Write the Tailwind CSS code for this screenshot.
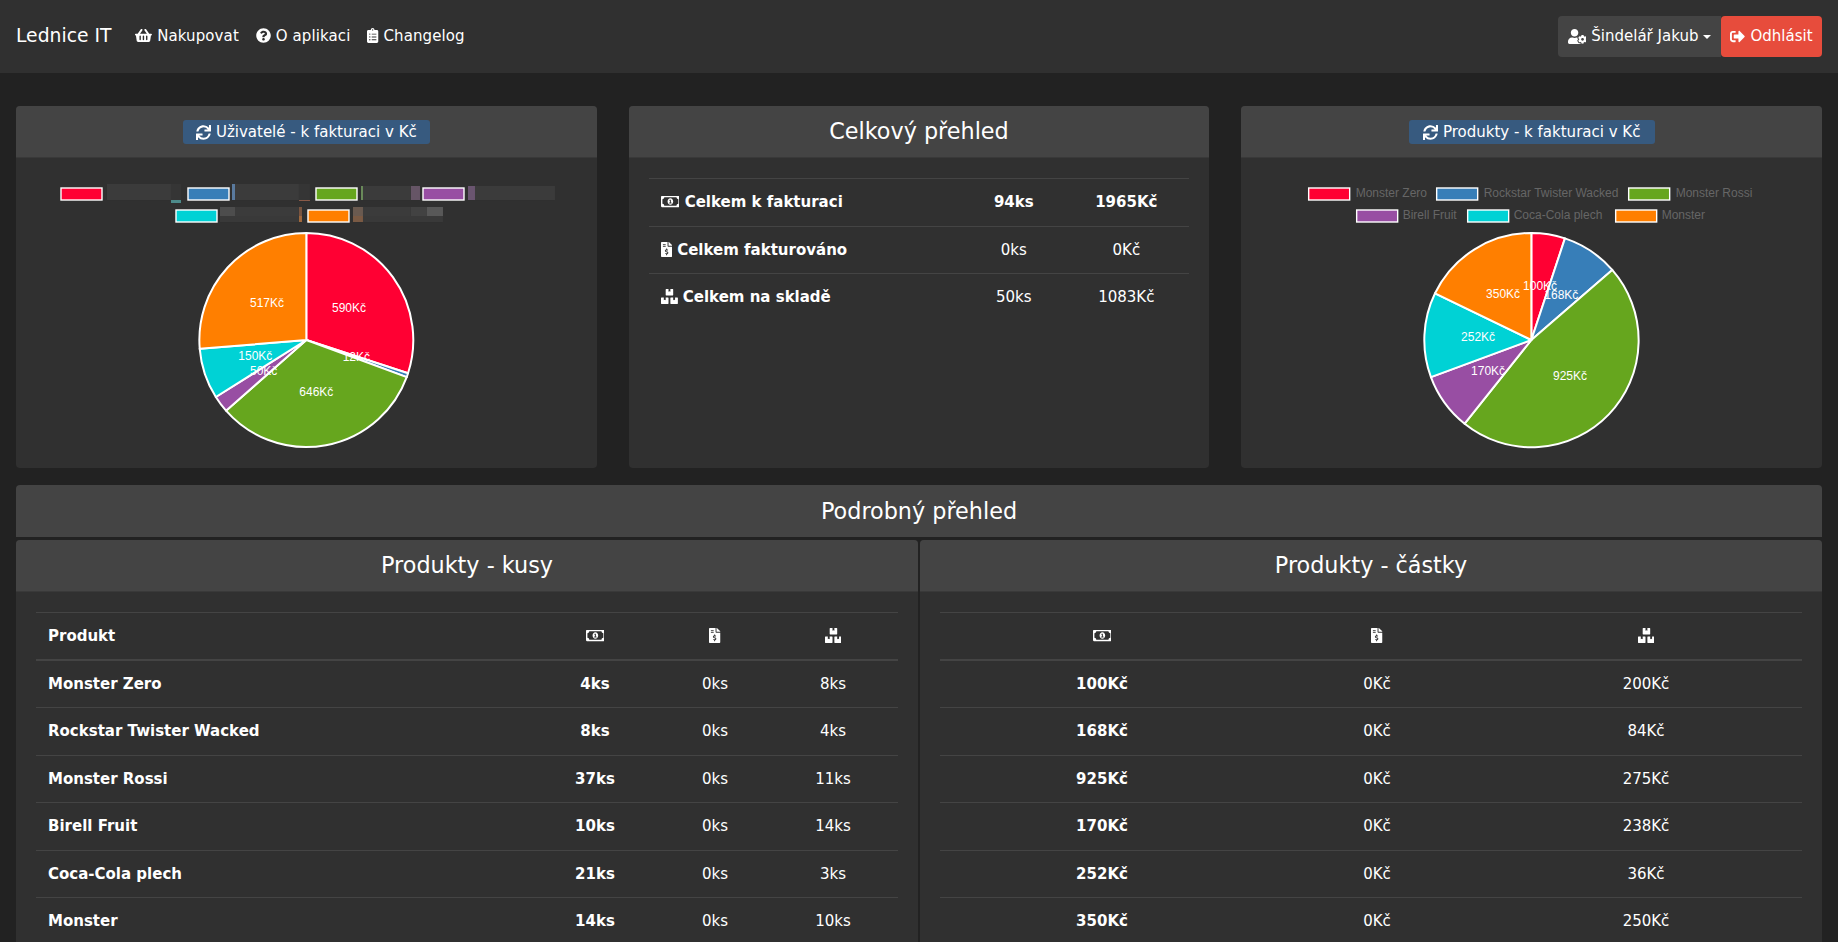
<!DOCTYPE html>
<html lang="cs">
<head>
<meta charset="utf-8">
<title>Lednice IT</title>
<script src="https://cdn.jsdelivr.net/npm/@tailwindcss/browser@4"></script>
</head>
<body class="h-screen overflow-hidden bg-[#222222] text-white font-['DejaVu_Sans',sans-serif] text-[15px] leading-[22.5px]">
<nav class="h-[73px] bg-[#303030] flex items-center px-4">
  <a class="text-[18.75px] mr-6">Lednice IT</a>
  <div class="flex gap-[17px] tracking-[0.1px]">
    <a><svg class="inline-block h-[15px] align-[-2px]" viewBox="0 0 576 512" fill="currentColor"><path d="M576 216v16c0 13.255-10.745 24-24 24h-8l-26.113 182.788C514.509 462.435 494.257 480 470.37 480H105.63c-23.887 0-44.139-17.565-47.518-41.212L32 256h-8c-13.255 0-24-10.745-24-24v-16c0-13.255 10.745-24 24-24h67.341l106.78-146.821c10.395-14.292 30.407-17.453 44.701-7.058 14.293 10.395 17.453 30.408 7.058 44.701L170.477 192h235.046L326.12 82.821c-10.395-14.292-7.234-34.306 7.059-44.701 14.291-10.395 34.306-7.235 44.701 7.058L484.659 192H552c13.255 0 24 10.745 24 24zM312 392V280c0-13.255-10.745-24-24-24s-24 10.745-24 24v112c0 13.255 10.745 24 24 24s24-10.745 24-24zm112 0V280c0-13.255-10.745-24-24-24s-24 10.745-24 24v112c0 13.255 10.745 24 24 24s24-10.745 24-24zm-224 0V280c0-13.255-10.745-24-24-24s-24 10.745-24 24v112c0 13.255 10.745 24 24 24s24-10.745 24-24z"/></svg> Nakupovat</a>
    <a><svg class="inline-block h-[15px] align-[-2px]" viewBox="0 0 512 512" fill="currentColor"><path d="M504 256c0 136.997-111.043 248-248 248S8 392.997 8 256C8 119.083 119.043 8 256 8s248 111.083 248 248zM262.655 90c-54.497 0-89.255 22.957-116.549 63.758-3.536 5.286-2.353 12.415 2.715 16.258l34.699 26.31c5.205 3.947 12.621 3.008 16.665-2.122 17.864-22.658 30.113-35.797 57.303-35.797 20.429 0 45.698 13.148 45.698 32.958 0 14.976-12.363 22.667-32.534 33.976C247.128 238.528 216 254.941 216 296v4c0 6.627 5.373 12 12 12h56c6.627 0 12-5.373 12-12v-1.333c0-28.462 83.186-29.647 83.186-106.667 0-58.002-60.165-102-116.531-102zM256 338c-25.365 0-46 20.635-46 46 0 25.364 20.635 46 46 46s46-20.636 46-46c0-25.365-20.635-46-46-46z"/></svg> O aplikaci</a>
    <a><svg class="inline-block h-[15px] align-[-2px]" viewBox="0 0 384 512" fill="currentColor"><path d="M336 64h-80c0-35.3-28.7-64-64-64s-64 28.7-64 64H48C21.5 64 0 85.5 0 112v352c0 26.5 21.5 48 48 48h288c26.5 0 48-21.5 48-48V112c0-26.5-21.5-48-48-48zM96 424c-13.3 0-24-10.7-24-24s10.7-24 24-24 24 10.7 24 24-10.7 24-24 24zm0-96c-13.3 0-24-10.7-24-24s10.7-24 24-24 24 10.7 24 24-10.7 24-24 24zm0-96c-13.3 0-24-10.7-24-24s10.7-24 24-24 24 10.7 24 24-10.7 24-24 24zm96-192c13.3 0 24 10.7 24 24s-10.7 24-24 24-24-10.7-24-24 10.7-24 24-24zm128 368c0 4.4-3.6 8-8 8H168c-4.4 0-8-3.6-8-8v-16c0-4.4 3.6-8 8-8h144c4.4 0 8 3.6 8 8v16zm0-96c0 4.4-3.6 8-8 8H168c-4.4 0-8-3.6-8-8v-16c0-4.4 3.6-8 8-8h144c4.4 0 8 3.6 8 8v16zm0-96c0 4.4-3.6 8-8 8H168c-4.4 0-8-3.6-8-8v-16c0-4.4 3.6-8 8-8h144c4.4 0 8 3.6 8 8v16z"/></svg> Changelog</a>
  </div>
  <div class="ml-auto flex">
    <a class="h-[41px] w-[163px] bg-[#444444] rounded-l-[4px] flex items-center justify-center gap-[5px]"><svg class="h-[15px]" viewBox="0 0 640 512" fill="currentColor"><path d="M610.5 373.3c2.6-14.1 2.6-28.5 0-42.6l25.8-14.9c3-1.7 4.3-5.2 3.3-8.5-6.7-21.6-18.2-41.2-33.2-57.4-2.3-2.5-6-3.1-9-1.4l-25.8 14.9c-10.9-9.3-23.4-16.5-36.9-21.3v-29.8c0-3.4-2.4-6.4-5.7-7.1-22.3-5-45-4.8-66.2 0-3.3.7-5.7 3.7-5.7 7.1v29.8c-13.5 4.8-26 12-36.9 21.3l-25.8-14.9c-2.9-1.7-6.7-1.1-9 1.4-15 16.2-26.5 35.8-33.2 57.4-1 3.3.4 6.8 3.3 8.5l25.8 14.9c-2.6 14.1-2.6 28.5 0 42.6l-25.8 14.9c-3 1.7-4.3 5.2-3.3 8.5 6.7 21.6 18.2 41.1 33.2 57.4 2.3 2.5 6 3.1 9 1.4l25.8-14.9c10.9 9.3 23.4 16.5 36.9 21.3v29.8c0 3.4 2.4 6.4 5.7 7.1 22.3 5 45 4.8 66.2 0 3.3-.7 5.7-3.7 5.7-7.1v-29.8c13.5-4.8 26-12 36.9-21.3l25.8 14.9c2.9 1.7 6.7 1.1 9-1.4 15-16.2 26.5-35.8 33.2-57.4 1-3.3-.4-6.8-3.3-8.5l-25.8-14.9zM496 400.5c-26.8 0-48.5-21.8-48.5-48.5s21.8-48.5 48.5-48.5 48.5 21.8 48.5 48.5-21.7 48.5-48.5 48.5zM224 256c70.7 0 128-57.3 128-128S294.7 0 224 0 96 57.3 96 128s57.3 128 128 128zm201.2 226.5c-2.3-1.2-4.6-2.6-6.8-3.9l-7.9 4.6c-6 3.4-12.8 5.3-19.6 5.3-10.9 0-21.4-4.6-28.9-12.6-18.3-19.8-32.3-43.9-40.2-69.6-5.5-17.7 1.9-36.4 17.9-45.7l7.9-4.6c-.1-2.6-.1-5.2 0-7.8l-7.9-4.6c-16-9.2-23.4-28-17.9-45.7.9-2.9 2.2-5.8 3.2-8.7-3.8-.3-7.5-1.2-11.4-1.2h-16.7c-22.2 10.2-46.9 16-72.9 16s-50.6-5.8-72.9-16h-16.7C60.2 288 0 348.2 0 422.4V464c0 26.5 21.5 48 48 48h352c10.1 0 19.5-3.2 27.2-8.5-1.2-3.8-2-7.7-2-11.8v-9.2z"/></svg><span>Šindelář Jakub</span><span class="w-0 h-0 border-x-[4px] border-x-transparent border-t-[4px] border-t-white"></span></a>
    <a class="h-[41px] w-[101px] bg-[#e74c3c] rounded-[4px] flex items-center justify-center gap-[5px]"><svg class="h-[15px]" viewBox="0 0 512 512" fill="currentColor"><path d="M497 273L329 441c-15 15-41 4.5-41-17v-96H152c-13.3 0-24-10.7-24-24v-96c0-13.3 10.7-24 24-24h136V88c0-21.4 25.9-32 41-17l168 168c9.3 9.4 9.3 24.6 0 34zM192 436v-40c0-6.6-5.4-12-12-12H96c-17.7 0-32-14.3-32-32V160c0-17.7 14.3-32 32-32h84c6.6 0 12-5.4 12-12V76c0-6.6-5.4-12-12-12H96c-53 0-96 43-96 96v192c0 53 43 96 96 96h84c6.6 0 12-5.4 12-12z"/></svg><span>Odhlásit</span></a>
  </div>
</nav>

<main class="px-4 pt-[33px]">
  <div class="grid grid-cols-3 gap-8">
    <section class="h-[362px] bg-[#303030] rounded-[4px] overflow-hidden">
      <header class="h-[52px] bg-[#444444] border-b border-black/15 flex items-center justify-center">
        <button class="h-[24px] w-[247px] pt-px bg-[#375a7f] rounded-[3px] flex items-center justify-center gap-[5px]"><svg class="h-[15px]" viewBox="0 0 512 512" fill="currentColor"><path d="M440.65 12.57l4 82.77A247.16 247.16 0 0 0 255.83 8C134.73 8 33.91 94.92 12.29 209.82A12 12 0 0 0 24.09 224h49.05a12 12 0 0 0 11.67-9.26 175.91 175.91 0 0 1 317-56.94l-101.46-4.86a12 12 0 0 0-12.57 12v47.41a12 12 0 0 0 12 12H500a12 12 0 0 0 12-12V12a12 12 0 0 0-12-12h-47.37a12 12 0 0 0-11.98 12.57zM255.83 432a175.61 175.61 0 0 1-146-77.8l101.8 4.87a12 12 0 0 0 12.57-12v-47.4a12 12 0 0 0-12-12H12a12 12 0 0 0-12 12V500a12 12 0 0 0 12 12h47.35a12 12 0 0 0 12-12.6l-4.15-82.57A247.17 247.17 0 0 0 255.83 504c121.11 0 221.93-86.92 243.55-201.82a12 12 0 0 0-11.8-14.18h-49.05a12 12 0 0 0-11.67 9.26A175.86 175.86 0 0 1 255.83 432z"/></svg>Uživatelé - k fakturaci v Kč</button>
      </header>
      <svg class="block w-full h-[310px]" viewBox="16 158 580.67 310">
        <g fill="#3b3b3b">
          <rect x="107" y="184" width="64" height="16"/><rect x="171" y="184" width="10" height="16" fill="#353535"/><rect x="171" y="200" width="10" height="3" fill="#4d8a8a"/>
          <rect x="235" y="184" width="64" height="16"/><rect x="232" y="184" width="3" height="16" fill="#5a7a9e"/><rect x="299" y="184" width="11" height="16" fill="#353535"/><rect x="299" y="200" width="11" height="1" fill="#8a5a48"/>
          <rect x="363" y="186" width="48" height="14"/><rect x="361" y="186" width="2" height="14" fill="#6a8a5a"/><rect x="411" y="186" width="9" height="14" fill="#665566"/>
          <rect x="475" y="186" width="80" height="14"/><rect x="468" y="186" width="7" height="14" fill="#6a5570"/>
          <rect x="235" y="207" width="64" height="9"/><rect x="220" y="207" width="15" height="9" fill="#4d4d4d"/><rect x="220" y="216" width="79" height="6" fill="#393939"/><rect x="299" y="207" width="3" height="9" fill="#7a5540"/><rect x="299" y="216" width="3" height="6" fill="#a0683c"/>
          <rect x="363" y="207" width="48" height="9"/><rect x="353" y="207" width="10" height="9" fill="#6a5a50"/><rect x="353" y="216" width="10" height="6" fill="#7a5a44"/><rect x="411" y="207" width="16" height="9" fill="#424242"/><rect x="427" y="207" width="16" height="9" fill="#585858"/><rect x="363" y="216" width="80" height="6" fill="#393939"/>
        </g>
        <g stroke="#ffffff" stroke-width="1.4">
          <rect x="61" y="188" width="41" height="12" fill="#ff0033"/><rect x="188" y="188" width="41" height="12" fill="#377eb8"/><rect x="316" y="188" width="41" height="12" fill="#66a61e"/><rect x="423" y="188" width="41" height="12" fill="#984ea3"/>
          <rect x="176" y="210" width="41" height="12" fill="#00d2d5"/><rect x="308" y="210" width="41" height="12" fill="#ff7f00"/>
        </g>
        <g transform="translate(306.33 340)" stroke="#ffffff" stroke-width="2" stroke-linejoin="round">
          <path fill="#ff0033" d="M0 0V-107A107 107 0 0 1 101.7 33.2Z"/>
          <path fill="#377eb8" d="M0 0L101.7 33.2A107 107 0 0 1 100.4 37.1Z"/>
          <path fill="#66a61e" d="M0 0L100.4 37.1A107 107 0 0 1 -80.3 70.7Z"/>
          <path fill="#984ea3" d="M0 0L-80.3 70.7A107 107 0 0 1 -90.5 57Z"/>
          <path fill="#00d2d5" d="M0 0L-90.5 57A107 107 0 0 1 -106.6 8.8Z"/>
          <path fill="#ff7f00" d="M0 0L-106.6 8.8A107 107 0 0 1 0 -107Z"/>
        </g>
        <g transform="translate(306.33 340)" fill="#ffffff" text-anchor="middle" class="font-['Liberation_Sans',sans-serif] text-[12px]">
          <text x="42.7" y="-28">590Kč</text><text x="50" y="21">12Kč</text><text x="10" y="56">646Kč</text><text x="-42.7" y="35">50Kč</text><text x="-51" y="20">150Kč</text><text x="-39.3" y="-33">517Kč</text>
        </g>
      </svg>
    </section>

    <section class="h-[362px] bg-[#303030] rounded-[4px] overflow-hidden">
      <header class="h-[52px] bg-[#444444] border-b border-black/15 flex items-center justify-center text-[22.3px]">Celkový přehled</header>
      <div class="p-5">
        <table class="w-full table-fixed">
          <colgroup><col><col class="w-[99px]"><col class="w-[126px]"></colgroup>
          <tbody>
            <tr class="border-t border-[#444444]"><th class="py-3 px-3 text-left font-bold"><svg class="inline-block h-[15px] align-[-2px]" viewBox="0 0 640 512" fill="currentColor"><path d="M320 144c-53.02 0-96 50.14-96 112 0 61.85 42.98 112 96 112 53 0 96-50.13 96-112 0-61.86-42.98-112-96-112zm40 168c0 4.42-3.58 8-8 8h-64c-4.42 0-8-3.58-8-8v-16c0-4.42 3.58-8 8-8h16v-55.44l-.47.31a7.992 7.992 0 0 1-11.09-2.22l-8.88-13.31a7.992 7.992 0 0 1 2.22-11.09l15.33-10.22a23.99 23.99 0 0 1 13.31-4.03H328c4.42 0 8 3.58 8 8v88h16c4.42 0 8 3.58 8 8v16zM608 64H32C14.33 64 0 78.33 0 96v320c0 17.67 14.33 32 32 32h576c17.67 0 32-14.33 32-32V96c0-17.67-14.33-32-32-32zm-16 272c-35.35 0-64 28.65-64 64H112c0-35.35-28.65-64-64-64V176c35.35 0 64-28.65 64-64h416c0 35.35 28.65 64 64 64v160z"/></svg> Celkem k fakturaci</th><td class="py-3 px-3 text-center font-bold">94ks</td><td class="py-3 px-3 text-center font-bold">1965Kč</td></tr>
            <tr class="border-t border-[#444444]"><th class="py-3 px-3 text-left font-bold"><svg class="inline-block h-[15px] align-[-2px]" viewBox="0 0 384 512" fill="currentColor"><path d="M377 105L279.1 7c-4.5-4.5-10.6-7-17-7H256v128h128v-6.1c0-6.3-2.5-12.4-7-16.9zm-153 31V0H24C10.7 0 0 10.7 0 24v464c0 13.3 10.7 24 24 24h336c13.3 0 24-10.7 24-24V160H248c-13.2 0-24-10.8-24-24zM64 72c0-4.42 3.58-8 8-8h80c4.42 0 8 3.58 8 8v16c0 4.42-3.58 8-8 8H72c-4.42 0-8-3.58-8-8V72zm0 80v-16c0-4.42 3.58-8 8-8h80c4.42 0 8 3.58 8 8v16c0 4.42-3.58 8-8 8H72c-4.42 0-8-3.58-8-8zm144 263.88V440c0 4.42-3.58 8-8 8h-16c-4.42 0-8-3.58-8-8v-24.29c-11.29-.58-22.27-4.52-31.37-11.35-3.9-2.93-4.1-8.77-.57-12.14l11.75-11.21c2.77-2.64 6.89-2.76 10.13-.73 3.87 2.42 8.26 3.72 12.82 3.72h28.11c6.5 0 11.8-5.92 11.8-13.19 0-5.95-3.61-11.19-8.77-12.73l-45-13.5c-18.59-5.58-31.58-23.42-31.58-43.39 0-24.52 19.05-44.44 42.67-45.07V232c0-4.42 3.58-8 8-8h16c4.42 0 8 3.58 8 8v24.29c11.29.58 22.27 4.51 31.37 11.35 3.9 2.93 4.1 8.77.57 12.14l-11.75 11.21c-2.77 2.64-6.89 2.76-10.13.73-3.87-2.43-8.26-3.72-12.82-3.72h-28.11c-6.5 0-11.8 5.92-11.8 13.19 0 5.95 3.61 11.19 8.77 12.73l45 13.5c18.59 5.58 31.58 23.42 31.58 43.39 0 24.53-19.05 44.44-42.67 45.07z"/></svg> Celkem fakturováno</th><td class="py-3 px-3 text-center">0ks</td><td class="py-3 px-3 text-center">0Kč</td></tr>
            <tr class="border-t border-[#444444]"><th class="py-3 px-3 text-left font-bold"><svg class="inline-block h-[15px] align-[-2px]" viewBox="0 0 576 512" fill="currentColor"><path d="M560 288h-80v96l-32-21.3-32 21.3v-96h-80c-8.8 0-16 7.2-16 16v192c0 8.8 7.2 16 16 16h224c8.8 0 16-7.2 16-16V304c0-8.8-7.2-16-16-16zm-384-64h224c8.8 0 16-7.2 16-16V16c0-8.8-7.2-16-16-16h-80v96l-32-21.3L256 96V0h-80c-8.8 0-16 7.2-16 16v192c0 8.8 7.2 16 16 16zm64 64h-80v96l-32-21.3L96 384v-96H16c-8.8 0-16 7.2-16 16v192c0 8.8 7.2 16 16 16h224c8.8 0 16-7.2 16-16V304c0-8.8-7.2-16-16-16z"/></svg> Celkem na skladě</th><td class="py-3 px-3 text-center">50ks</td><td class="py-3 px-3 text-center">1083Kč</td></tr>
          </tbody>
        </table>
      </div>
    </section>

    <section class="h-[362px] bg-[#303030] rounded-[4px] overflow-hidden">
      <header class="h-[52px] bg-[#444444] border-b border-black/15 flex items-center justify-center">
        <button class="h-[24px] w-[246px] pt-px bg-[#375a7f] rounded-[3px] flex items-center justify-center gap-[5px]"><svg class="h-[15px]" viewBox="0 0 512 512" fill="currentColor"><path d="M440.65 12.57l4 82.77A247.16 247.16 0 0 0 255.83 8C134.73 8 33.91 94.92 12.29 209.82A12 12 0 0 0 24.09 224h49.05a12 12 0 0 0 11.67-9.26 175.91 175.91 0 0 1 317-56.94l-101.46-4.86a12 12 0 0 0-12.57 12v47.41a12 12 0 0 0 12 12H500a12 12 0 0 0 12-12V12a12 12 0 0 0-12-12h-47.37a12 12 0 0 0-11.98 12.57zM255.83 432a175.61 175.61 0 0 1-146-77.8l101.8 4.87a12 12 0 0 0 12.57-12v-47.4a12 12 0 0 0-12-12H12a12 12 0 0 0-12 12V500a12 12 0 0 0 12 12h47.35a12 12 0 0 0 12-12.6l-4.15-82.57A247.17 247.17 0 0 0 255.83 504c121.11 0 221.93-86.92 243.55-201.82a12 12 0 0 0-11.8-14.18h-49.05a12 12 0 0 0-11.67 9.26A175.86 175.86 0 0 1 255.83 432z"/></svg>Produkty - k fakturaci v Kč</button>
      </header>
      <svg class="block w-full h-[310px]" viewBox="1241.33 158 580.67 310">
        <g stroke="#ffffff" stroke-width="1.4">
          <rect x="1309" y="188" width="41" height="12" fill="#ff0033"/><rect x="1437" y="188" width="41" height="12" fill="#377eb8"/><rect x="1629" y="188" width="41" height="12" fill="#66a61e"/>
          <rect x="1357" y="210" width="41" height="12" fill="#984ea3"/><rect x="1468" y="210" width="41" height="12" fill="#00d2d5"/><rect x="1616" y="210" width="41" height="12" fill="#ff7f00"/>
        </g>
        <g fill="#666666" class="font-['Liberation_Sans',sans-serif] text-[12px]">
          <text x="1356" y="197">Monster Zero</text><text x="1484" y="197">Rockstar Twister Wacked</text><text x="1676" y="197">Monster Rossi</text>
          <text x="1403" y="219">Birell Fruit</text><text x="1514" y="219">Coca-Cola plech</text><text x="1662" y="219">Monster</text>
        </g>
        <g transform="translate(1531.67 340)" stroke="#ffffff" stroke-width="2" stroke-linejoin="round">
          <path fill="#ff0033" d="M0 0V-107A107 107 0 0 1 33.6 -101.6Z"/>
          <path fill="#377eb8" d="M0 0L33.6 -101.6A107 107 0 0 1 80.9 -70.1Z"/>
          <path fill="#66a61e" d="M0 0L80.9 -70.1A107 107 0 0 1 -66.7 83.7Z"/>
          <path fill="#984ea3" d="M0 0L-66.7 83.7A107 107 0 0 1 -100.4 37.1Z"/>
          <path fill="#00d2d5" d="M0 0L-100.4 37.1A107 107 0 0 1 -96.3 -46.7Z"/>
          <path fill="#ff7f00" d="M0 0L-96.3 -46.7A107 107 0 0 1 0 -107Z"/>
        </g>
        <g transform="translate(1531.67 340)" fill="#ffffff" text-anchor="middle" class="font-['Liberation_Sans',sans-serif] text-[12px]">
          <text x="8.7" y="-50">100Kč</text><text x="30" y="-41">168Kč</text><text x="38.7" y="40">925Kč</text><text x="-43.3" y="35">170Kč</text><text x="-53.3" y="1">252Kč</text><text x="-28.3" y="-42">350Kč</text>
        </g>
      </svg>
    </section>
  </div>

  <section class="mt-[17px]">
    <header class="h-[52px] bg-[#444444] rounded-t-[4px] flex items-center justify-center text-[22.3px]">Podrobný přehled</header>
    <div class="grid grid-cols-2 gap-[2px] mt-[3px]">
      <div class="bg-[#303030] rounded-t-[4px]">
        <header class="h-[52px] bg-[#444444] rounded-t-[4px] border-b border-black/15 flex items-center justify-center text-[22.3px]">Produkty - kusy</header>
        <div class="px-5 pt-5">
          <table class="w-full table-fixed">
            <colgroup><col><col class="w-[134px]"><col class="w-[106px]"><col class="w-[130px]"></colgroup>
            <thead><tr class="border-t border-b-2 border-[#444444]"><th class="py-[11.5px] px-3 text-left font-bold">Produkt</th>
              <th class="py-[11.5px] px-3"><svg class="inline-block h-[15px] align-[-2px]" viewBox="0 0 640 512" fill="currentColor"><path d="M320 144c-53.02 0-96 50.14-96 112 0 61.85 42.98 112 96 112 53 0 96-50.13 96-112 0-61.86-42.98-112-96-112zm40 168c0 4.42-3.58 8-8 8h-64c-4.42 0-8-3.58-8-8v-16c0-4.42 3.58-8 8-8h16v-55.44l-.47.31a7.992 7.992 0 0 1-11.09-2.22l-8.88-13.31a7.992 7.992 0 0 1 2.22-11.09l15.33-10.22a23.99 23.99 0 0 1 13.31-4.03H328c4.42 0 8 3.58 8 8v88h16c4.42 0 8 3.58 8 8v16zM608 64H32C14.33 64 0 78.33 0 96v320c0 17.67 14.33 32 32 32h576c17.67 0 32-14.33 32-32V96c0-17.67-14.33-32-32-32zm-16 272c-35.35 0-64 28.65-64 64H112c0-35.35-28.65-64-64-64V176c35.35 0 64-28.65 64-64h416c0 35.35 28.65 64 64 64v160z"/></svg></th>
              <th class="py-[11.5px] px-3"><svg class="inline-block h-[15px] align-[-2px]" viewBox="0 0 384 512" fill="currentColor"><path d="M377 105L279.1 7c-4.5-4.5-10.6-7-17-7H256v128h128v-6.1c0-6.3-2.5-12.4-7-16.9zm-153 31V0H24C10.7 0 0 10.7 0 24v464c0 13.3 10.7 24 24 24h336c13.3 0 24-10.7 24-24V160H248c-13.2 0-24-10.8-24-24zM64 72c0-4.42 3.58-8 8-8h80c4.42 0 8 3.58 8 8v16c0 4.42-3.58 8-8 8H72c-4.42 0-8-3.58-8-8V72zm0 80v-16c0-4.42 3.58-8 8-8h80c4.42 0 8 3.58 8 8v16c0 4.42-3.58 8-8 8H72c-4.42 0-8-3.58-8-8zm144 263.88V440c0 4.42-3.58 8-8 8h-16c-4.42 0-8-3.58-8-8v-24.29c-11.29-.58-22.27-4.52-31.37-11.35-3.9-2.93-4.1-8.77-.57-12.14l11.75-11.21c2.77-2.64 6.89-2.76 10.13-.73 3.87 2.42 8.26 3.72 12.82 3.72h28.11c6.5 0 11.8-5.92 11.8-13.19 0-5.95-3.61-11.19-8.77-12.73l-45-13.5c-18.59-5.58-31.58-23.42-31.58-43.39 0-24.52 19.05-44.44 42.67-45.07V232c0-4.42 3.58-8 8-8h16c4.42 0 8 3.58 8 8v24.29c11.29.58 22.27 4.51 31.37 11.35 3.9 2.93 4.1 8.77.57 12.14l-11.75 11.21c-2.77 2.64-6.89 2.76-10.13.73-3.87-2.43-8.26-3.72-12.82-3.72h-28.11c-6.5 0-11.8 5.92-11.8 13.19 0 5.95 3.61 11.19 8.77 12.73l45 13.5c18.59 5.58 31.58 23.42 31.58 43.39 0 24.53-19.05 44.44-42.67 45.07z"/></svg></th>
              <th class="py-[11.5px] px-3"><svg class="inline-block h-[15px] align-[-2px]" viewBox="0 0 576 512" fill="currentColor"><path d="M560 288h-80v96l-32-21.3-32 21.3v-96h-80c-8.8 0-16 7.2-16 16v192c0 8.8 7.2 16 16 16h224c8.8 0 16-7.2 16-16V304c0-8.8-7.2-16-16-16zm-384-64h224c8.8 0 16-7.2 16-16V16c0-8.8-7.2-16-16-16h-80v96l-32-21.3L256 96V0h-80c-8.8 0-16 7.2-16 16v192c0 8.8 7.2 16 16 16zm64 64h-80v96l-32-21.3L96 384v-96H16c-8.8 0-16 7.2-16 16v192c0 8.8 7.2 16 16 16h224c8.8 0 16-7.2 16-16V304c0-8.8-7.2-16-16-16z"/></svg></th></tr></thead>
            <tbody class="text-center">
              <tr class="border-t border-[#444444]"><th class="py-3 px-3 text-left font-bold">Monster Zero</th><td class="py-3 px-3 font-bold">4ks</td><td class="py-3 px-3">0ks</td><td class="py-3 px-3">8ks</td></tr>
              <tr class="border-t border-[#444444]"><th class="py-3 px-3 text-left font-bold">Rockstar Twister Wacked</th><td class="py-3 px-3 font-bold">8ks</td><td class="py-3 px-3">0ks</td><td class="py-3 px-3">4ks</td></tr>
              <tr class="border-t border-[#444444]"><th class="py-3 px-3 text-left font-bold">Monster Rossi</th><td class="py-3 px-3 font-bold">37ks</td><td class="py-3 px-3">0ks</td><td class="py-3 px-3">11ks</td></tr>
              <tr class="border-t border-[#444444]"><th class="py-3 px-3 text-left font-bold">Birell Fruit</th><td class="py-3 px-3 font-bold">10ks</td><td class="py-3 px-3">0ks</td><td class="py-3 px-3">14ks</td></tr>
              <tr class="border-t border-[#444444]"><th class="py-3 px-3 text-left font-bold">Coca-Cola plech</th><td class="py-3 px-3 font-bold">21ks</td><td class="py-3 px-3">0ks</td><td class="py-3 px-3">3ks</td></tr>
              <tr class="border-t border-[#444444]"><th class="py-3 px-3 text-left font-bold">Monster</th><td class="py-3 px-3 font-bold">14ks</td><td class="py-3 px-3">0ks</td><td class="py-3 px-3">10ks</td></tr>
            </tbody>
          </table>
        </div>
      </div>
      <div class="bg-[#303030] rounded-t-[4px]">
        <header class="h-[52px] bg-[#444444] rounded-t-[4px] border-b border-black/15 flex items-center justify-center text-[22.3px]">Produkty - částky</header>
        <div class="px-5 pt-5">
          <table class="w-full table-fixed">
            <colgroup><col class="w-[324px]"><col class="w-[226px]"><col></colgroup>
            <thead><tr class="border-t border-b-2 border-[#444444]">
              <th class="py-[11.5px] px-3"><svg class="inline-block h-[15px] align-[-2px]" viewBox="0 0 640 512" fill="currentColor"><path d="M320 144c-53.02 0-96 50.14-96 112 0 61.85 42.98 112 96 112 53 0 96-50.13 96-112 0-61.86-42.98-112-96-112zm40 168c0 4.42-3.58 8-8 8h-64c-4.42 0-8-3.58-8-8v-16c0-4.42 3.58-8 8-8h16v-55.44l-.47.31a7.992 7.992 0 0 1-11.09-2.22l-8.88-13.31a7.992 7.992 0 0 1 2.22-11.09l15.33-10.22a23.99 23.99 0 0 1 13.31-4.03H328c4.42 0 8 3.58 8 8v88h16c4.42 0 8 3.58 8 8v16zM608 64H32C14.33 64 0 78.33 0 96v320c0 17.67 14.33 32 32 32h576c17.67 0 32-14.33 32-32V96c0-17.67-14.33-32-32-32zm-16 272c-35.35 0-64 28.65-64 64H112c0-35.35-28.65-64-64-64V176c35.35 0 64-28.65 64-64h416c0 35.35 28.65 64 64 64v160z"/></svg></th>
              <th class="py-[11.5px] px-3"><svg class="inline-block h-[15px] align-[-2px]" viewBox="0 0 384 512" fill="currentColor"><path d="M377 105L279.1 7c-4.5-4.5-10.6-7-17-7H256v128h128v-6.1c0-6.3-2.5-12.4-7-16.9zm-153 31V0H24C10.7 0 0 10.7 0 24v464c0 13.3 10.7 24 24 24h336c13.3 0 24-10.7 24-24V160H248c-13.2 0-24-10.8-24-24zM64 72c0-4.42 3.58-8 8-8h80c4.42 0 8 3.58 8 8v16c0 4.42-3.58 8-8 8H72c-4.42 0-8-3.58-8-8V72zm0 80v-16c0-4.42 3.58-8 8-8h80c4.42 0 8 3.58 8 8v16c0 4.42-3.58 8-8 8H72c-4.42 0-8-3.58-8-8zm144 263.88V440c0 4.42-3.58 8-8 8h-16c-4.42 0-8-3.58-8-8v-24.29c-11.29-.58-22.27-4.52-31.37-11.35-3.9-2.93-4.1-8.77-.57-12.14l11.75-11.21c2.77-2.64 6.89-2.76 10.13-.73 3.87 2.42 8.26 3.72 12.82 3.72h28.11c6.5 0 11.8-5.92 11.8-13.19 0-5.95-3.61-11.19-8.77-12.73l-45-13.5c-18.59-5.58-31.58-23.42-31.58-43.39 0-24.52 19.05-44.44 42.67-45.07V232c0-4.42 3.58-8 8-8h16c4.42 0 8 3.58 8 8v24.29c11.29.58 22.27 4.51 31.37 11.35 3.9 2.93 4.1 8.77.57 12.14l-11.75 11.21c-2.77 2.64-6.89 2.76-10.13.73-3.87-2.43-8.26-3.72-12.82-3.72h-28.11c-6.5 0-11.8 5.92-11.8 13.19 0 5.95 3.61 11.19 8.77 12.73l45 13.5c18.59 5.58 31.58 23.42 31.58 43.39 0 24.53-19.05 44.44-42.67 45.07z"/></svg></th>
              <th class="py-[11.5px] px-3"><svg class="inline-block h-[15px] align-[-2px]" viewBox="0 0 576 512" fill="currentColor"><path d="M560 288h-80v96l-32-21.3-32 21.3v-96h-80c-8.8 0-16 7.2-16 16v192c0 8.8 7.2 16 16 16h224c8.8 0 16-7.2 16-16V304c0-8.8-7.2-16-16-16zm-384-64h224c8.8 0 16-7.2 16-16V16c0-8.8-7.2-16-16-16h-80v96l-32-21.3L256 96V0h-80c-8.8 0-16 7.2-16 16v192c0 8.8 7.2 16 16 16zm64 64h-80v96l-32-21.3L96 384v-96H16c-8.8 0-16 7.2-16 16v192c0 8.8 7.2 16 16 16h224c8.8 0 16-7.2 16-16V304c0-8.8-7.2-16-16-16z"/></svg></th></tr></thead>
            <tbody class="text-center">
              <tr class="border-t border-[#444444]"><td class="py-3 px-3 font-bold">100Kč</td><td class="py-3 px-3">0Kč</td><td class="py-3 px-3">200Kč</td></tr>
              <tr class="border-t border-[#444444]"><td class="py-3 px-3 font-bold">168Kč</td><td class="py-3 px-3">0Kč</td><td class="py-3 px-3">84Kč</td></tr>
              <tr class="border-t border-[#444444]"><td class="py-3 px-3 font-bold">925Kč</td><td class="py-3 px-3">0Kč</td><td class="py-3 px-3">275Kč</td></tr>
              <tr class="border-t border-[#444444]"><td class="py-3 px-3 font-bold">170Kč</td><td class="py-3 px-3">0Kč</td><td class="py-3 px-3">238Kč</td></tr>
              <tr class="border-t border-[#444444]"><td class="py-3 px-3 font-bold">252Kč</td><td class="py-3 px-3">0Kč</td><td class="py-3 px-3">36Kč</td></tr>
              <tr class="border-t border-[#444444]"><td class="py-3 px-3 font-bold">350Kč</td><td class="py-3 px-3">0Kč</td><td class="py-3 px-3">250Kč</td></tr>
            </tbody>
          </table>
        </div>
      </div>
    </div>
  </section>
</main>
</body>
</html>
